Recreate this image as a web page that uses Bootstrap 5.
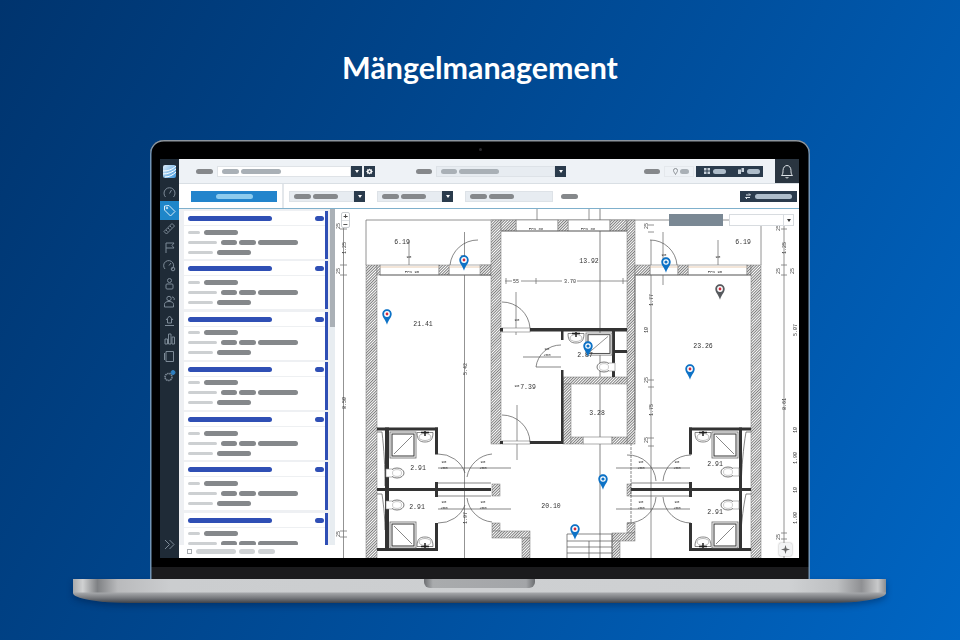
<!DOCTYPE html>
<html lang="de">
<head>
    <meta charset="UTF-8">
    <meta name="viewport" content="width=device-width, initial-scale=1.0">
    <title>Mängelmanagement</title>
    <link href="https://cdn.jsdelivr.net/npm/bootstrap@5.3.3/dist/css/bootstrap.min.css" rel="stylesheet">
    <style>
        html, body { height: 100%; }
        body {
            width: 960px;
            height: 640px;
            overflow: hidden;
            background: linear-gradient(118deg, #00346e 0%, #00509f 58%, #0066c4 100%);
        }
        .page-title {
            height: 140px;
            margin: 0;
            padding-top: 49px;
            font: 700 30.4px/36px Lato, sans-serif;
            color: #fff;
            text-align: center;
        }
        .lid {
            width: 660px;
            height: 439px;
            margin-left: 150px;
            padding: 19px 11px 0 10px;
            background: linear-gradient(#000 0, #000 427px, #1b1b1d 427px);
            border-radius: 14px 14px 0 0;
            box-shadow: inset 0 1.5px 0 #8d959d, inset 1.5px 0 0 #6f93b6, inset -1.5px 0 0 #6f93b6;
            position: relative;
        }
        .cam { position: absolute; left: 329px; top: 8px; width: 3px; height: 3px; border-radius: 50%; background: #2a2a2e; }
        .screen { height: 399px; background: #fff; overflow: hidden; filter: blur(.35px); }

        /* sidebar */
        .side { width: 19px; background: #1f2b37; }
        .side-ico { height: 18.3px; }
        .side-ico svg { width: 13px; height: 13px; fill: none; stroke: #7d8a97; stroke-width: 1; }
        .side-ico.on { background: #1f86c9; }
        .side-ico.on svg { stroke: #d8edf9; }
        .side-logo { height: 24px; }
        .side-logo svg { width: 13px; height: 13px; }

        /* pills stand in for the blurred labels */
        .pill { display: block; height: 5px; border-radius: 3px; background: #85888b; flex: none; }
        .pill.soft { background: #a9b0b6; }
        .pill.pale { height: 3px; background: #cdd0d2; }
        .pill.blank { background: #cfd2d4; }
        .pill.sky { background: #8ccbee; }
        .pill.frost { background: #aebdca; }
        .pill.bluebar { background: #2f4fb5; }
        .pw-9 { width: 9px; } .pw-12 { width: 12px; } .pw-13 { width: 13px; } .pw-16 { width: 16px; }
        .pw-17 { width: 17px; } .pw-25 { width: 25px; } .pw-29 { width: 29px; } .pw-34 { width: 34px; }
        .pw-37 { width: 37px; } .pw-40 { width: 40px; } .pw-84 { width: 84px; }

        /* top bars */
        .topbar { height: 25px; background: #eef2f6; border-bottom: 1px solid #d9dfe4; }
        .seg-a { width: 237px; padding-left: 17px; }
        .seg-b { width: 228px; }
        .seg-c { width: 131px; }
        .bell { width: 24px; background: #2a3540; }
        .bell svg { width: 14px; height: 15px; fill: none; stroke: #dfe4e8; stroke-width: 1; }
        .field { height: 11px; padding-left: 4px; gap: 2px; border: 1px solid #dfe3e7; background: #fff; }
        .field.tint { background: #e7ecf1; border-color: #dde2e7; }
        .field-main { width: 134px; }
        .field-two { width: 119px; }
        .field-sel { width: 65px; }
        .field-wide { width: 88px; margin-left: 12px; }
        .field-pin { width: 30px; background: #eef2f6; border-color: #e4e8ec; padding-left: 8px; }
        .field-pin svg { width: 5px; height: 7px; fill: none; stroke: #8a8f94; }
        .sq { width: 11px; height: 11px; background: #2a3b4c; flex: none; }
        .sq-caret { width: 0; height: 0; border: 2px solid transparent; border-top: 3px solid #fff; border-bottom: 0; }
        .dark-caret { border-top-color: #333; }
        .sq svg { width: 7px; height: 7px; fill: #fff; }
        .gear-gap { margin-left: 2px; }
        .sel-gap { margin-left: 12px; }
        .dark-box { width: 67px; height: 11px; background: #2a3b4c; margin-left: 2px; padding-left: 8px; gap: 3px; }
        .dark-box svg { width: 6px; height: 6px; fill: #c7d1da; flex: none; }
        .dark-box .gap-next { margin-right: 9px; }
        .toolbar { height: 25px; border-bottom: 1px solid #7fb0cc; background: #fff; }
        .tool-a { width: 105px; padding-left: 12px; border-right: 2px solid #e3e7eb; height: 100%; }
        .tool-b { padding-left: 5px; }
        .btn-new { width: 86px; height: 11px; background: #2284cc; }
        .btn-swap { width: 57px; height: 11px; margin-left: 162px; background: #2a3b4c; padding-left: 5px; gap: 4px; }
        .btn-swap svg { width: 6px; height: 6px; fill: none; stroke: #dfe6ec; }

        /* list */
        .list-pane { width: 156px; background: #eef0f3; min-height: 0; }
        .list-body { flex: 1 1 0; min-height: 0; }
        .list-scroll { width: 151px; overflow: hidden; padding: 2px 2px 0 5px; }
        .snag { height: 48px; margin-bottom: 2.25px; background: #fff; border-right: 3px solid #2f4fb5; padding-left: 4px; padding-right: 1px; }
        .snag-head { height: 15px; padding-top: 1px; border-bottom: 1px solid #eef0f2; margin-left: -4px; padding-left: 4px; margin-right: -1px; padding-right: 1px; }
        .snag-row { height: 10px; gap: 2px; }
        .snag-row .pale { margin-right: 2px; }
        .snag-rows { padding-top: 1px; }
        .list-foot { height: 13px; background: #fff; padding-left: 8px; gap: 3px; }
        .tick { width: 5px; height: 5px; border: 1px solid #a7abaf; margin-right: 1px; }
        .rail { width: 5px; background: #e8edf1; }
        .rail-thumb { height: 118px; background: #aab0b6; }

        /* plan */
        .plan { position: relative; background: #fff; flex: 1 1 0; }
        .plan > svg { position: absolute; left: 0; top: 0; width: 100%; height: 100%; }
        .plan text { font-family: "Liberation Mono", monospace; fill: #333; }
        .zoom-ctl { position: absolute; left: 6px; top: 3px; width: 9px; height: 16px; background: #fff; border: 1px solid #c9cdd1; border-radius: 2px; font: 700 8px/7px "Liberation Sans", sans-serif; color: #444; text-align: center; }
        .zoom-ctl div + div { border-top: 1px solid #dfe2e5; }
        .scale-box { position: absolute; left: 334px; top: 5px; width: 54px; height: 12px; background: #7a8894; }
        .scale-sel { position: absolute; left: 394px; top: 5px; width: 65px; height: 12px; background: #fff; border: 1px solid #d8dce0; }
        .scale-sel i { width: 10px; height: 100%; margin-left: auto; border-left: 1px solid #d8dce0; }
        .locate { position: absolute; left: 444px; top: 334px; width: 13px; height: 13px; background: #f3f4f5; border-radius: 2px; box-shadow: 0 0 2px #999; }
        .locate svg { width: 9px; height: 9px; fill: #666; }

        /* laptop base */
        .base {
            width: 813px;
            height: 24px;
            margin-left: 73px;
            border-radius: 0 0 56px 56px / 0 0 10px 10px;
            background:
                linear-gradient(#0000 0, #0000 13px, #a4a6a9 14px, #77797d 19px, #3e4148 24px),
                linear-gradient(90deg, #a8aaac 0, #d0d1d2 1.2%, #7f8184 3%, #b9babc 5.5%, #cbcdcf 12%, #cfd1d3 88%, #bdbfc1 94%, #8f9093 97%, #c8c9ca 99%, #8b8d90 100%);
            box-shadow: 0 3px 6px rgba(0, 16, 50, .35);
        }
        .notch {
            width: 111px;
            height: 9px;
            margin-left: 351px;
            border-radius: 0 0 6px 6px;
            background: linear-gradient(90deg, #6c6e71, #a9abad 8%, #a3a5a8 92%, #6c6e71);
        }
    </style>
</head>
<body>
<h1 class="page-title">Mängelmanagement</h1>

<div class="lid">
    <div class="cam"></div>
    <div class="screen d-flex">
        <nav class="side d-flex flex-column">
            <div class="side-logo d-flex align-items-center justify-content-center">
                <svg viewBox="0 0 13 13"><defs><linearGradient id="lg" x1="0" y1="0" x2="1" y2="1"><stop offset="0" stop-color="#dfeefb"/><stop offset="1" stop-color="#3b93d8"/></linearGradient></defs><rect width="13" height="13" rx="2" fill="url(#lg)"/><path d="M0 6C4 6 9 5 13 1M0 9C5 9 10 7 13 4M2 12C6 12 10 10 13 7" fill="none" stroke="#fff" stroke-width="1"/></svg>
            </div>
            <div class="side-ico d-flex align-items-center justify-content-center"><svg viewBox="0 0 13 13"><path d="M2.5 11A5.5 5.5 0 1 1 10.5 11M6.5 7.5 8.5 4"/></svg></div>
            <div class="side-ico on d-flex align-items-center justify-content-center"><svg viewBox="0 0 13 13"><path d="M1.5 2 6 1.5 12 7.5 7.5 12 1.5 6Z"/><circle cx="4" cy="4" r=".8"/></svg></div>
            <div class="side-ico d-flex align-items-center justify-content-center"><svg viewBox="0 0 13 13"><path d="M1 9.5 9 1.5 11.5 4 3.5 12ZM3 8l1.5 1.5M5 6l1.5 1.5M7 4l1.5 1.5"/></svg></div>
            <div class="side-ico d-flex align-items-center justify-content-center"><svg viewBox="0 0 13 13"><path d="M3 12V2H11L9 4.5 11 7H3"/></svg></div>
            <div class="side-ico d-flex align-items-center justify-content-center"><svg viewBox="0 0 13 13"><path d="M2 10A5 5 0 1 1 8 11M6 6.5 8 4"/><circle cx="10" cy="10" r="1.8"/></svg></div>
            <div class="side-ico d-flex align-items-center justify-content-center"><svg viewBox="0 0 13 13"><circle cx="6.5" cy="3.5" r="2"/><rect x="3" y="7" width="7" height="5" rx="1"/></svg></div>
            <div class="side-ico d-flex align-items-center justify-content-center"><svg viewBox="0 0 13 13"><circle cx="6" cy="3.5" r="2.2"/><path d="M1.5 12V9.5C1.5 7.5 3 6.5 6 6.5S10.5 7.5 10.5 9.5V12ZM9 2a2 2 0 0 1 2 3"/></svg></div>
            <div class="side-ico d-flex align-items-center justify-content-center"><svg viewBox="0 0 13 13"><path d="M3 6 6.5 2 10 6M4.5 5V9H8.5V5M2 11.5H11"/></svg></div>
            <div class="side-ico d-flex align-items-center justify-content-center"><svg viewBox="0 0 13 13"><path d="M2 12V7H4.5V12ZM5.500 12V2H8V12ZM9 12V5H11.5V12Z"/></svg></div>
            <div class="side-ico d-flex align-items-center justify-content-center"><svg viewBox="0 0 13 13"><path d="M3 1.5H10.5V11.5H3ZM1.5 3V10"/></svg></div>
            <div class="side-ico d-flex align-items-center justify-content-center"><svg viewBox="0 0 13 13"><circle cx="5.5" cy="8" r="3.5" stroke-dasharray="1.5 .6" stroke-width="1.5"/><circle cx="10" cy="3.5" r="2" stroke="#2f7fc0" fill="#2f7fc0"/></svg></div>
            <div class="side-ico d-flex align-items-center justify-content-center mt-auto mb-1"><svg viewBox="0 0 13 13"><path d="M2 2 6.5 6.5 2 11M6.5 2 11 6.5 6.5 11"/></svg></div>
        </nav>

        <div class="flex-grow-1 d-flex flex-column">
            <div class="topbar d-flex flex-shrink-0">
                <div class="seg-a d-flex align-items-center">
                    <span class="pill pw-17 me-1"></span>
                    <div class="field field-main d-flex align-items-center"><span class="pill soft pw-17"></span><span class="pill soft pw-40"></span></div>
                    <div class="sq d-flex align-items-center justify-content-center"><span class="sq-caret"></span></div>
                    <div class="sq d-flex align-items-center justify-content-center gear-gap"><svg viewBox="0 0 7 7"><path d="M3.5 .5 4.3 1.4 5.6 1 5.8 2.4 6.900 3.5 5.8 4.6 5.6 6 4.3 5.6 3.5 6.5 2.7 5.6 1.4 6 1.2 4.6.1 3.5 1.2 2.4 1.4 1 2.7 1.4Z"/><circle cx="3.5" cy="3.5" r="1" fill="#2a3b4c"/></svg></div>
                </div>
                <div class="seg-b d-flex align-items-center">
                    <span class="pill pw-16 me-1"></span>
                    <div class="field field-two tint d-flex align-items-center"><span class="pill soft pw-16"></span><span class="pill soft pw-40"></span></div>
                    <div class="sq d-flex align-items-center justify-content-center"><span class="sq-caret"></span></div>
                </div>
                <div class="seg-c d-flex align-items-center">
                    <span class="pill pw-16 me-1"></span>
                    <div class="field field-pin d-flex align-items-center"><svg viewBox="0 0 5 7"><path d="M2.5 6.5C1.5 4.5.5 3.8.5 2.5a2 2 0 0 1 4 0C4.500 3.8 3.5 4.5 2.5 6.5Z"/></svg><span class="pill soft pw-9"></span></div>
                    <div class="dark-box d-flex align-items-center">
                        <svg viewBox="0 0 6 6"><path d="M0 0H2.5V2.5H0ZM3.5 0H6V2.5H3.5ZM0 3.5H2.5V6H0ZM3.5 3.5H6V6H3.5Z"/></svg><span class="pill frost pw-13 gap-next"></span>
                        <svg viewBox="0 0 6 6"><path d="M0 1.5H3V6H0ZM3.5 0H6V4H3.5Z"/></svg><span class="pill frost pw-13"></span>
                    </div>
                </div>
                <div class="bell d-flex align-items-center justify-content-center"><svg viewBox="0 0 14 15"><path d="M1.5 11.5C3 10 3 8.500 3 6.500 3 3.500 5 1.500 7 1.500S11 3.500 11 6.500C11 8.500 11 10 12.500 11.500ZM5.500 13C6 14.300 8 14.300 8.500 13"/></svg></div>
            </div>

            <div class="toolbar d-flex align-items-center flex-shrink-0">
                <div class="tool-a d-flex align-items-center">
                    <div class="btn-new d-flex align-items-center justify-content-center"><span class="pill sky pw-37"></span></div>
                </div>
                <div class="tool-b d-flex align-items-center">
                    <div class="field field-sel tint d-flex align-items-center"><span class="pill pw-17"></span><span class="pill pw-25"></span></div>
                    <div class="sq d-flex align-items-center justify-content-center"><span class="sq-caret"></span></div>
                    <div class="field field-sel tint d-flex align-items-center sel-gap"><span class="pill pw-17"></span><span class="pill pw-25"></span></div>
                    <div class="sq d-flex align-items-center justify-content-center"><span class="sq-caret"></span></div>
                    <div class="field field-wide tint d-flex align-items-center"><span class="pill pw-17"></span><span class="pill pw-25"></span></div>
                    <span class="pill pw-17 ms-2"></span>
                    <div class="btn-swap d-flex align-items-center"><svg viewBox="0 0 6 6"><path d="M1 2H5.5L4 .5M5 4.5H.5L2 6"/></svg><span class="pill frost pw-37"></span></div>
                </div>
            </div>

            <div class="d-flex flex-grow-1">
                <div class="list-pane d-flex flex-column">
                    <div class="list-body d-flex">
                        <div class="list-scroll" id="snags"></div>
                        <div class="rail"><div class="rail-thumb"></div></div>
                    </div>
                    <div class="list-foot d-flex align-items-center">
                        <span class="tick"></span><span class="pill blank pw-40"></span><span class="pill blank pw-16"></span><span class="pill blank pw-17"></span>
                    </div>
                </div>
                <div class="plan">
                    <svg viewBox="335 209 464 349">
                        <defs>
                            <pattern id="hatch" width="2" height="2" patternUnits="userSpaceOnUse" patternTransform="rotate(-45)"><rect width="2" height="2" fill="#fff"/><rect width="2" height="1" fill="#7d7d7d"/></pattern>
                            <symbol id="pin" viewBox="0 0 10 16"><path d="M5 .3C2.3.3.3 2.4.3 5.1.3 8.6 3.6 11 5 15.7 6.4 11 9.700 8.600 9.700 5.100 9.700 2.400 7.700.3 5 .3Z"/><circle cx="5" cy="5" r="2.900" fill="#fff"/><circle cx="5" cy="5" r="1.400" fill="#d22b3c"/></symbol>
                            <symbol id="pin-open" viewBox="0 0 10 16"><path d="M5 .3C2.3.3.3 2.4.3 5.1.3 8.6 3.6 11 5 15.7 6.4 11 9.700 8.600 9.700 5.100 9.700 2.400 7.700.3 5 .3Z"/><circle cx="5" cy="5" r="2.800" fill="#fff"/><circle cx="5" cy="5" r="1.600" fill="#0d72c6"/></symbol>
                            <g id="shower-up"><rect x="0" y="0" width="26" height="26" fill="#fff" stroke="#666" stroke-width=".8"/><rect x="2" y="2" width="22" height="22" fill="none" stroke="#333" stroke-width="1"/><path d="M4 22 22 4" stroke="#555" stroke-width=".7"/></g>
                            <g id="sink"><path d="M0 1.500H16C16 9 13 11 8 11S0 9 0 1.500Z" fill="#fff" stroke="#555" stroke-width=".7"/><ellipse cx="8" cy="6" rx="6" ry="3.500" fill="none" stroke="#777" stroke-width=".5"/><path d="M8 0V5M4 1.500H12" stroke="#222" stroke-width="1.500"/></g>
                            <g id="toilet"><ellipse cx="0" cy="0" rx="7" ry="5" fill="#fff" stroke="#555" stroke-width=".8"/><ellipse cx="0" cy="0" rx="4.500" ry="3.400" fill="none" stroke="#999" stroke-width=".5"/><path d="M5 -4H11V4H5" fill="#fff" stroke="#888" stroke-width=".6"/></g>
                        </defs>

                        <!-- dimension lines -->
                        <g stroke="#777" stroke-width=".8" fill="none">
                            <path d="M343.5 225V558M784 225V558M651 240V558M464.5 232V558"/>
                            <path d="M600 209V558" stroke="#666"/>
                            <path d="M366 220H669M723 220H729"/>
                            <path d="M505 281H627M366 220V265M761 220V265"/>
                            <path d="M340 229H347M340 265H347M340 275H347M340 531H347M340 537H347M781 229H787M781 265H787M781 275H787M781 533H787M781 539H787M648 225H654M648 232H654M648 380H654M648 387H654M648 438H654M648 446H654M506 278V284M536 278V284M623 278V284"/>
                            <path d="M409 240V265M718 240V270M537 209V227M589 209V227M663 232V285M516 292V335M517 405V460"/>
                        </g>

                        <!-- window strips -->
                        <g fill="#fff" stroke="#777" stroke-width=".6">
                            <rect x="380" y="265" width="59" height="10"/>
                            <rect x="449" y="265" width="42" height="10"/>
                            <rect x="516" y="220" width="42" height="11"/>
                            <rect x="568" y="220" width="42" height="11"/>
                            <rect x="650" y="265" width="28" height="10"/>
                            <rect x="688" y="265" width="59" height="10"/>
                            <rect x="502" y="328" width="28" height="4"/>
                            <rect x="502" y="441" width="28" height="3"/>
                            <rect x="583" y="437" width="29" height="7"/>
                        </g>
                        <path d="M380 267H439M449 267H491M650 267H678M688 267H747" stroke="#e8cdb3" stroke-width="1"/>

                        <!-- hatched walls -->
                        <g fill="url(#hatch)" stroke="#777" stroke-width=".5">
                            <rect x="366" y="265" width="11" height="293"/>
                            <rect x="377" y="265" width="3" height="10"/>
                            <rect x="439" y="265" width="10" height="10"/>
                            <rect x="480" y="265" width="11" height="10"/>
                            <rect x="491" y="220" width="10" height="224"/>
                            <rect x="501" y="220" width="15" height="11"/>
                            <rect x="558" y="220" width="10" height="11"/>
                            <rect x="610" y="220" width="17" height="11"/>
                            <rect x="627" y="220" width="8" height="224"/>
                            <rect x="635" y="265" width="15" height="10"/>
                            <rect x="678" y="265" width="10" height="10"/>
                            <rect x="747" y="265" width="4" height="10"/>
                            <rect x="751" y="265" width="10" height="293"/>
                            <rect x="563" y="377" width="64" height="7"/>
                            <rect x="563" y="384" width="8" height="60"/>
                            <rect x="571" y="437" width="12" height="7"/>
                            <rect x="612" y="437" width="15" height="7"/>
                            <rect x="492" y="484" width="8" height="12"/>
                            <rect x="627" y="484" width="4" height="12"/>
                            <rect x="492" y="523" width="8" height="8"/>
                            <rect x="492" y="531" width="38" height="7"/>
                            <rect x="522" y="538" width="8" height="20"/>
                            <rect x="627" y="523" width="8" height="10"/>
                            <rect x="612" y="533" width="23" height="8"/>
                            <rect x="612" y="541" width="8" height="17"/>
                        </g>

                        <!-- thin outlines -->
                        <g stroke="#555" stroke-width=".7" fill="none">
                            <path d="M380 275H491M501 231H627M635 275H751M635 275V430"/>
                            <path d="M450 265A28 28 0 0 1 478 240"/>
                            <path d="M650 240A27 27 0 0 1 677 265"/>
                            <path d="M502 302A28 28 0 0 1 530 328"/>
                            <path d="M502 415A28 28 0 0 1 530 442"/>
                            <path d="M536 367A25 25 0 0 1 561 345M536 367H561M523 357H561"/>
                            <path d="M438 454A28 28 0 0 1 465 473M492 454A28 28 0 0 0 467 477"/>
                            <path d="M438 523A28 28 0 0 0 465 505M492 522A28 28 0 0 1 467 498"/>
                            <path d="M627 455A28 28 0 0 1 656 481M691 455A28 28 0 0 0 663 481"/>
                            <path d="M627 523A28 28 0 0 0 656 497M691 523A28 28 0 0 1 663 497"/>
                            <path d="M438 468H511M438 509H511M616 468H690M616 509H690"/>
                            <path d="M567 534V558M612 534V558M567 534H612M567 541H612M567 547H612M567 553H612M589 541V558"/>
                            <path d="M438 483H491M438 496H491M631 483H689M631 496H689"/>
                            <path d="M631 443V523" stroke-dasharray="3 1"/>
                            <path d="M377 432H382C384 450 385 465 385 486M377 494H382C384 508 385 520 385 530M751 432H746C743 450 742 465 741 486M751 494H746C743 508 742 520 741 530"/>
                        </g>

                        <!-- solid walls -->
                        <g fill="#333">
                            <rect x="530" y="328" width="97" height="3.5"/>
                            <rect x="500" y="328" width="3" height="3.5"/>
                            <rect x="561" y="331" width="2.500" height="9"/>
                            <rect x="561" y="370" width="2.500" height="74"/>
                            <rect x="530" y="441" width="33" height="3"/>
                            <rect x="500" y="441" width="3" height="3"/>
                            <rect x="612" y="331" width="3" height="46"/>
                            <rect x="615" y="350" width="12" height="3"/>
                            <!-- left baths -->
                            <rect x="377" y="427.5" width="61" height="3"/>
                            <rect x="377" y="488" width="114" height="3"/>
                            <rect x="377" y="548" width="61" height="3"/>
                            <rect x="385" y="427.5" width="4" height="123"/>
                            <rect x="435" y="427.5" width="3" height="27"/>
                            <rect x="435" y="482" width="3" height="15"/>
                            <rect x="435" y="523" width="3" height="28"/>
                            <!-- right baths -->
                            <rect x="689" y="427.5" width="62" height="3"/>
                            <rect x="631" y="488" width="120" height="3"/>
                            <rect x="689" y="548" width="62" height="3"/>
                            <rect x="739" y="427.5" width="3" height="123"/>
                            <rect x="689" y="427.5" width="3" height="27"/>
                            <rect x="689" y="482" width="3" height="15"/>
                            <rect x="689" y="523" width="3" height="28"/>
                        </g>

                        <!-- fixtures -->
                        <use href="#shower-up" x="390" y="432"/>
                        <use href="#shower-up" transform="matrix(1 0 0 -1 390 548)"/>
                        <use href="#sink" x="417" y="431"/>
                        <use href="#sink" transform="matrix(1 0 0 -1 417 548)"/>
                        <use href="#toilet" transform="matrix(-1 0 0 1 397 473)"/>
                        <use href="#toilet" transform="matrix(-1 0 0 1 397 505)"/>
                        <use href="#shower-up" transform="matrix(-1 0 0 1 738 432)"/>
                        <use href="#shower-up" transform="matrix(-1 0 0 -1 738 548)"/>
                        <use href="#sink" x="695" y="431"/>
                        <use href="#sink" transform="matrix(1 0 0 -1 695 548)"/>
                        <use href="#toilet" x="728" y="472"/>
                        <use href="#toilet" x="728" y="505"/>
                        <use href="#shower-up" transform="translate(586 333) scale(1 .85)"/>
                        <use href="#sink" x="568" y="332"/>
                        <use href="#toilet" x="604" y="367"/>

                        <!-- room labels -->
                        <g font-size="6.5" text-anchor="middle">
                            <text x="402" y="243.5">6.19</text>
                            <text x="743" y="243.5">6.19</text>
                            <text x="423" y="325.5">21.41</text>
                            <text x="589" y="262.5">13.92</text>
                            <text x="703" y="348">23.26</text>
                            <text x="528" y="389">7.39</text>
                            <text x="597" y="414.5">3.28</text>
                            <text x="585" y="356.5">2.87</text>
                            <text x="551" y="508">20.10</text>
                            <text x="418" y="469.5">2.91</text>
                            <text x="417" y="509">2.91</text>
                            <text x="715" y="465.5">2.91</text>
                            <text x="715" y="514">2.91</text>
                        </g>
                        <g font-size="5" text-anchor="middle">
                            <rect x="512" y="279" width="9" height="5" fill="#fff"/>
                            <text x="516" y="283">55</text>
                            <rect x="562" y="278" width="15" height="6" fill="#fff"/>
                            <text x="570" y="283">3.70</text>
                            <text transform="translate(345.5 248) rotate(-90)">1.25</text>
                            <text transform="translate(340 226) rotate(-90)">25</text>
                            <text transform="translate(340 271) rotate(-90)">25</text>
                            <text transform="translate(345.5 403) rotate(-90)">8.50</text>
                            <text transform="translate(340 534) rotate(-90)">25</text>
                            <text transform="translate(786 248) rotate(-90)">1.25</text>
                            <text transform="translate(780 228) rotate(-90)">25</text>
                            <text transform="translate(780 271) rotate(-90)">25</text>
                            <text transform="translate(794 271) rotate(-90)">25</text>
                            <text transform="translate(786 404) rotate(-90)">8.61</text>
                            <text transform="translate(780 537) rotate(-90)">25</text>
                            <text transform="translate(797 330) rotate(-90)">5.07</text>
                            <text transform="translate(797 430) rotate(-90)">10</text>
                            <text transform="translate(797 458) rotate(-90)">1.90</text>
                            <text transform="translate(797 490) rotate(-90)">10</text>
                            <text transform="translate(797 518) rotate(-90)">1.90</text>
                            <text transform="translate(653 300) rotate(-90)">1.77</text>
                            <text transform="translate(653 410) rotate(-90)">1.75</text>
                            <text transform="translate(648 226) rotate(-90)">25</text>
                            <text transform="translate(648 330) rotate(-90)">10</text>
                            <text transform="translate(648 380) rotate(-90)">25</text>
                            <text transform="translate(648 440) rotate(-90)">25</text>
                            <text transform="translate(466.5 369) rotate(-90)">5.42</text>
                            <text transform="translate(466.5 518) rotate(-90)">1.97</text>
                        </g>
                        <g font-size="4" text-anchor="middle">
                            <text x="412" y="273">FPN 90</text>
                            <text x="536" y="229.5">FPN 88</text>
                            <text x="588" y="229.5">FPN 88</text>
                            <text x="715" y="273">FPN 90</text>
                            <text x="463" y="257">90</text>
                            <text x="664" y="256">90</text>
                            <text x="409" y="258">90</text>
                            <text x="718" y="258">90</text>
                            <text x="517" y="321">90</text>
                            <text x="517" y="387">90</text>
                            <text x="547" y="350">90</text>
                            <text x="547" y="356">200</text>
                            <text x="444" y="463">90</text>
                            <text x="444" y="469">200</text>
                            <text x="444" y="503">90</text>
                            <text x="444" y="509">200</text>
                            <text x="641" y="463">90</text>
                            <text x="641" y="469">200</text>
                            <text x="641" y="503">90</text>
                            <text x="641" y="509">200</text>
                            <text x="677" y="463">90</text>
                            <text x="677" y="469">200</text>
                            <text x="677" y="503">90</text>
                            <text x="677" y="509">200</text>
                            <text x="483" y="463">90</text>
                            <text x="483" y="469">200</text>
                            <text x="483" y="503">90</text>
                            <text x="483" y="509">200</text>
                        </g>

                        <!-- pins -->
                        <g fill="#0d72c6">
                            <use href="#pin" x="382" y="309" width="10" height="16"/>
                            <use href="#pin" x="459" y="255" width="10" height="16"/>
                            <use href="#pin-open" x="661" y="257" width="10" height="16"/>
                            <use href="#pin" x="685" y="364" width="10" height="16"/>
                            <use href="#pin-open" x="583" y="341" width="10" height="16"/>
                            <use href="#pin-open" x="598" y="474" width="10" height="16"/>
                            <use href="#pin" x="570" y="524" width="10" height="16"/>
                        </g>
                        <use href="#pin" x="715" y="284" width="10" height="16" fill="#565a5e"/>
                    </svg>

                    <div class="zoom-ctl"><div>+</div><div>−</div></div>
                    <div class="scale-box"></div>
                    <div class="scale-sel"><i class="d-flex align-items-center justify-content-center"><span class="sq-caret dark-caret"></span></i></div>
                    <div class="locate d-flex align-items-center justify-content-center"><svg viewBox="0 0 9 9"><path d="M4.5 0 5.5 3.5 9 4.5 5.5 5.5 4.5 9 3.5 5.5 0 4.5 3.5 3.5Z"/></svg></div>
                </div>
            </div>
        </div>
    </div>
</div>
<div class="base">
    <div class="notch"></div>
</div>

<template id="snag-tpl">
    <div class="snag">
        <div class="snag-head d-flex align-items-center justify-content-between">
            <span class="pill bluebar pw-84"></span><span class="pill bluebar pw-9"></span>
        </div>
        <div class="snag-rows">
            <div class="snag-row d-flex align-items-center"><span class="pill pale pw-12"></span><span class="pill pw-34"></span></div>
            <div class="snag-row d-flex align-items-center"><span class="pill pale pw-29"></span><span class="pill pw-16"></span><span class="pill pw-17"></span><span class="pill pw-40"></span></div>
            <div class="snag-row d-flex align-items-center"><span class="pill pale pw-25"></span><span class="pill pw-34"></span></div>
        </div>
    </div>
</template>
<script src="https://cdn.jsdelivr.net/npm/bootstrap@5.3.3/dist/js/bootstrap.bundle.min.js"></script>
<script>
    const snags = document.querySelector('#snags');
    const tpl = document.querySelector('#snag-tpl');
    for (let i = 0; i < 7; i++) {
        snags.appendChild(tpl.content.cloneNode(true));
    }
</script>
</body>
</html>
